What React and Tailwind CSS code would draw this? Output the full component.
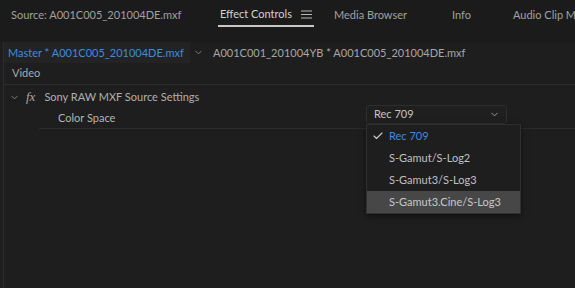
import { ChevronDown, Check } from 'lucide-react';

const TOP_TABS = [
  { label: 'Source: A001C005_201004DE.mxf', x: 'w-[218px] pl-[11px]' },
  { label: 'Effect Controls', x: 'w-[116px]', active: true },
  { label: 'Media Browser', x: 'w-[118px]' },
  { label: 'Info', x: 'w-[61px]' },
  { label: 'Audio Clip Mixer', x: 'w-[90px]' },
];

const OPTIONS = ['Rec 709', 'S-Gamut/S-Log2', 'S-Gamut3/S-Log3', 'S-Gamut3.Cine/S-Log3'];

export default function App() {
  return (
    <div
      className="w-[575px] h-[288px] overflow-hidden bg-[#1e1e1e] text-[11px] text-[#b4b4b4] flex flex-col"
      style={{ fontFamily: 'Lato, "Noto Sans", sans-serif' }}
    >
      {/* Panel tab strip */}
      <div className="h-[42px] shrink-0 flex bg-[#1b1b1b] whitespace-nowrap">
        {TOP_TABS.map((t) => (
          <div key={t.label} className={`${t.x} shrink-0 flex`}>
            <div
              className={`h-[27px] pt-[3px] flex items-center ${
                t.active
                  ? 'gap-[9px] px-[2px] border-b-2 border-[#c8c8c8] text-[#d2d2d2]'
                  : 'text-[#a0a0a0]'
              }`}
            >
              <span>{t.label}</span>
              {t.active && (
                <svg width="11" height="9" viewBox="0 0 11 9" className="text-[#b8b8b8]">
                  <path d="M0 1h11M0 4.5h11M0 8h11" stroke="currentColor" strokeWidth="1.2" />
                </svg>
              )}
            </div>
          </div>
        ))}
      </div>

      {/* Panel body */}
      <div className="flex-1 ml-[3px] border-l border-[#2c2c2c] flex flex-col">
        {/* Clip selector */}
        <div className="h-[21px] flex items-center whitespace-nowrap">
          <div className="w-[186px] h-full bg-[#232323] flex items-center pl-[4px] pt-[1px] text-[#3c8ce0]">
            Master * A001C005_201004DE.mxf
          </div>
          <ChevronDown size={11} className="ml-[3px] text-[#9a9a9a]" strokeWidth={1.6} />
          <span className="ml-[9px] pt-[1px] text-[#a6a6a6]">A001C001_201004YB * A001C005_201004DE.mxf</span>
        </div>

        {/* Video header */}
        <div className="h-[22px] flex items-center pl-[8px] border-b border-[#2b2b2b] text-[#a8a8a8]">
          Video
        </div>

        {/* Effect row */}
        <div className="h-[23px] flex items-center pl-[5px] pt-[1px]">
          <ChevronDown size={11} className="text-[#a0a0a0]" strokeWidth={1.6} />
          <span
            className="ml-[6px] italic text-[13px] text-[#a8a8a8]"
            style={{ fontFamily: '"Liberation Serif", serif' }}
          >
            fx
          </span>
          <span className="ml-[9px] text-[#b0b0b0]">Sony RAW MXF Source Settings</span>
        </div>

        {/* Color Space row */}
        <div className="ml-[35px] h-[21px] pt-[1px] flex items-center border-b border-[#2b2b2b] relative">
          <span className="ml-[19px] text-[#b4b4b4]">Color Space</span>
          <div className="absolute left-[327px] top-[-3px] w-[141px] h-[19px] bg-[#1f1f1f] border border-[#2e2e2e] rounded-[3px] flex items-center pl-[7px] pr-[6px] text-[#c4c4c4]">
            <span className="flex-1">Rec 709</span>
            <ChevronDown size={11} className="text-[#b0b0b0]" strokeWidth={1.8} />
          </div>
          {/* Open menu */}
          <div className="absolute left-[327px] top-[16px] w-[155px] bg-[#1e1e1e] border border-[#303030] shadow-[0_2px_6px_rgba(0,0,0,0.5)] flex flex-col">
            {OPTIONS.map((o, i) => (
              <div
                key={o}
                className={`h-[22px] flex items-center whitespace-nowrap ${
                  i === 3 ? 'bg-[#474747] text-[#c8c8c8]' : 'text-[#c0c0c0]'
                }`}
              >
                <span className="w-[22px] flex justify-center">
                  {i === 0 && <Check size={12} strokeWidth={2.2} className="text-[#cfcfcf]" />}
                </span>
                <span className={i === 0 ? 'text-[#3c8ce0]' : ''}>{o}</span>
              </div>
            ))}
          </div>
        </div>
      </div>
    </div>
  );
}
